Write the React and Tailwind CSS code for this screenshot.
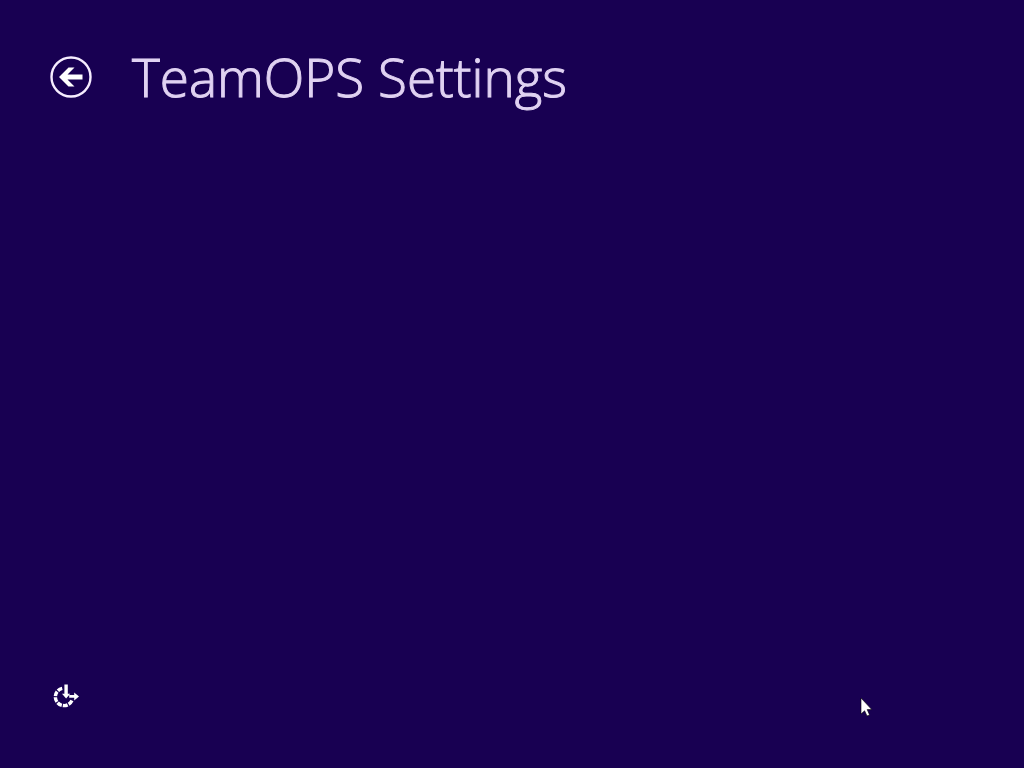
const BackIcon = () => (
    <svg viewBox="0 0 42 42" className="w-[42px] h-[42px]" aria-hidden="true">
        <circle cx="21" cy="21" r="19.5" fill="none" stroke="#f6ecff" strokeWidth="2.4" />
        <path d="M9 21 L18.5 11.5 H24.5 L17.5 18.5 H32.5 V23.5 H17.5 L24.5 30.5 H18.5 Z" fill="#fff" />
    </svg>
);

const EaseOfAccessIcon = () => (
    <svg viewBox="0 0 28 28" className="w-7 h-7" aria-hidden="true">
        {/* Dashed wheel */}
        <path
            d="M10.2 7.4 A8.7 8.7 0 1 0 20.4 18.4"
            fill="none"
            stroke="#fff"
            strokeWidth="3.4"
            strokeDasharray="4.9 1.1"
        />
        {/* Down arrow */}
        <path d="M12.4 3.4 H15.8 V12.8 H18.2 L14.1 17.6 L10 12.8 H12.4 Z" fill="#fff" />
        {/* Right arrow */}
        <path d="M17.2 14 H22.2 V11.4 L27 15.4 L22.2 19.4 V16.8 H17.2 Z" fill="#fff" />
    </svg>
);

const Pointer = () => (
    <svg
        viewBox="0 0 12 20"
        className="absolute left-[84%] bottom-[51px] w-3 h-5"
        aria-hidden="true"
    >
        <path
            d="M1 1 V17 L4.6 13.8 L7 19 L9.6 17.9 L7.2 12.6 H11.8 Z"
            fill="#fff"
            stroke="#000"
            strokeWidth="0.6"
        />
    </svg>
);

export default function App() {
    return (
        <div className="relative min-h-screen flex flex-col justify-between overflow-hidden bg-[#180052] text-[#e0d2f2]">
            <header className="flex items-center gap-10 pl-[50px] pt-10">
                <button type="button" aria-label="Back" className="shrink-0 rounded-full">
                    <BackIcon />
                </button>
                <h1 className="font-['Open_Sans',sans-serif] font-light text-[53px] leading-[74px] [-webkit-text-stroke:1px]">
                    TeamOPS Settings
                </h1>
            </header>

            <footer className="flex pl-[52px] pb-[59px]">
                <button type="button" aria-label="Ease of access">
                    <EaseOfAccessIcon />
                </button>
            </footer>

            <Pointer />
        </div>
    );
}
